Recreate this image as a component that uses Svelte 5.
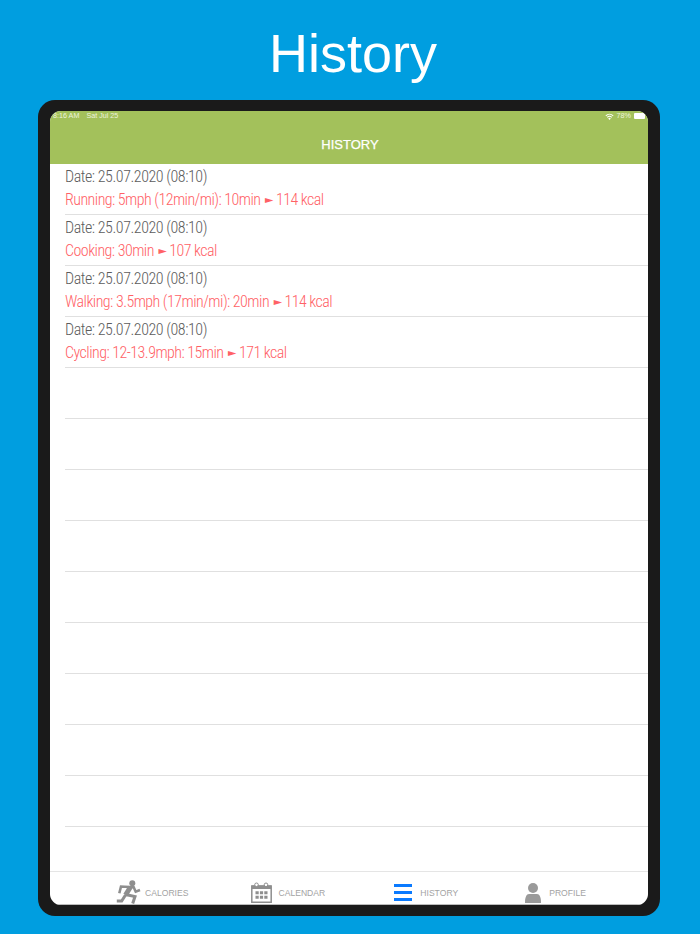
<script lang="ts">
  type Entry = { date: string; activity: string; kcal: string };

  const entries: Entry[] = [
    { date: 'Date: 25.07.2020 (08:10)', activity: 'Running: 5mph (12min/mi): 10min', kcal: '114 kcal' },
    { date: 'Date: 25.07.2020 (08:10)', activity: 'Cooking: 30min', kcal: '107 kcal' },
    { date: 'Date: 25.07.2020 (08:10)', activity: 'Walking: 3.5mph (17min/mi): 20min', kcal: '114 kcal' },
    { date: 'Date: 25.07.2020 (08:10)', activity: 'Cycling: 12-13.9mph: 15min', kcal: '171 kcal' }
  ];
  const emptyRows = Array(9);
</script>

<main class="page">
  <h1>History</h1>

  <div class="device">
    <div class="screen">
      <header class="nav">
        <div class="status">
          <span class="clock">8:16 AM<span class="day">Sat Jul 25</span></span>
          <span class="battery-group">
            <svg class="wifi" viewBox="0 0 12 9" aria-hidden="true">
              <path d="M6 9 4.300 7.100a2.500 2.500 0 0 1 3.400 0z" />
              <path d="M3.400 6.100a3.900 3.900 0 0 1 5.200 0l.9-1a5.300 5.300 0 0 0-7 0z" />
              <path d="M1.500 4a6.600 6.600 0 0 1 9 0l.9-1a8 8 0 0 0-10.800 0z" />
            </svg>
            78%
            <span class="battery"></span>
          </span>
        </div>
        <div class="nav-title">HISTORY</div>
      </header>

      <div class="list">
        {#each entries as entry}
          <div class="row">
            <div class="date">{entry.date}</div>
            <div class="activity">{entry.activity}<span class="arrow">►</span>{entry.kcal}</div>
          </div>
        {/each}
        {#each emptyRows as _}
          <div class="row"></div>
        {/each}
      </div>

      <nav class="tabs">
        <div class="tab tab-calories">
          <svg class="icon" viewBox="0 0 25 25" width="25" height="25" aria-hidden="true">
            <circle cx="16.300" cy="3.300" r="3" fill="#8e8e8e" />
            <path d="M3.300 13.300 5 6.500l12.700.8 2 4.400 4.300-1.700" fill="none" stroke="#8e8e8e" stroke-width="2.600" />
            <path d="M14.500 7 9.500 15" fill="none" stroke="#8e8e8e" stroke-width="5" />
            <path d="M9.500 14.500 19 16.500l-2.300 7M9.500 15l-3.800 6H.8" fill="none" stroke="#8e8e8e" stroke-width="3" />
          </svg>
          <span>CALORIES</span>
        </div>
        <div class="tab tab-calendar">
          <svg class="icon" viewBox="0 0 21 21" width="21" height="21" aria-hidden="true">
            <path d="M.8 4h19.400v16.200H.8z" fill="none" stroke="#8e8e8e" stroke-width="1.500" />
            <path d="M.8 3.500h19.400v3.500H.8z" fill="#8e8e8e" />
            <circle cx="5.500" cy="2.800" r="1.800" fill="#fff" stroke="#8e8e8e" />
            <circle cx="15" cy="2.800" r="1.800" fill="#fff" stroke="#8e8e8e" />
            <path d="M4.500 9.200h3.200v3H4.500zM8.900 9.200h3.200v3H8.900zM13.300 9.200h3.200v3h-3.200zM4.500 13.700h3.200v3H4.500zM8.900 13.700h3.200v3H8.900zM13.300 13.700h3.200v3h-3.200z" fill="#8e8e8e" />
          </svg>
          <span>CALENDAR</span>
        </div>
        <div class="tab tab-history">
          <svg class="icon" viewBox="0 0 18 17" width="18" height="17" aria-hidden="true">
            <path d="M0 0h18v3H0zM0 7h18v3H0zM0 14h18v3H0z" fill="#0a7aff" />
          </svg>
          <span>HISTORY</span>
        </div>
        <div class="tab tab-profile">
          <svg class="icon" viewBox="0 0 16 20" width="16" height="20" aria-hidden="true">
            <circle cx="8" cy="5" r="5" fill="#9a9a9a" />
            <path d="M4 11h8c2.500 0 4 3.500 4 8v1H0v-1c0-4.500 1.500-8 4-8z" fill="#9a9a9a" />
          </svg>
          <span>PROFILE</span>
        </div>
      </nav>
    </div>
  </div>
</main>

<style>
  :global(body) { margin: 0; background: #009ee0; }
  .page { display: flex; flex-direction: column; align-items: center; height: 934px; overflow: hidden; font-family: "Liberation Sans", Arial, sans-serif; }
  h1 { margin: 0; height: 100px; padding-left: 6px; color: #fff; font-size: 54px; font-weight: 400; line-height: 106px; }
  .device { box-sizing: border-box; width: 622px; height: 816px; margin-right: 2px; padding: 11px 12px; border-radius: 17px; background: #1a1a1a; }
  .screen { display: flex; flex-direction: column; height: 100%; overflow: hidden; border-radius: 11px; background: #fff; }
  .nav { flex: none; height: 53px; background: #a3c15b; color: #fff; }
  .status { display: flex; justify-content: space-between; height: 10px; padding: 0 3px; color: #eef4dd; font-size: 7.2px; line-height: 10px; }
  .day { margin-left: 7px; }
  .battery-group { display: inline-flex; align-items: center; gap: 2px; }
  .wifi { width: 9px; height: 7px; margin-right: 1px; fill: #fff; }
  .battery { width: 11px; height: 6px; margin-left: 1px; border-radius: 1px; background: #fff; }
  .nav-title { margin-top: 14px; padding-left: 2px; text-align: center; font-size: 13px; font-weight: 500; line-height: 20px; -webkit-text-stroke: .25px #fff; }
  .list { flex: 1; padding-left: 15px; }
  .row { box-sizing: border-box; height: 51px; border-bottom: 1px solid #e0e0e0; font-family: Roboto, "Liberation Sans", sans-serif; font-stretch: 75%; font-size: 16px; font-weight: 300; letter-spacing: -.45px; line-height: 23px; }
  .date { padding-top: 1px; color: #5c5c5c; }
  .activity { color: #ff6166; letter-spacing: -.53px; }
  .arrow { display: inline-block; margin: 0 .3px 0 1.800px; font-family: "DejaVu Sans", sans-serif; font-size: 14px; line-height: 1; transform: scaleY(.62); }
  .tabs { flex: none; display: flex; box-sizing: border-box; height: 34px; padding-top: 9px; border-top: 1px solid #e5e5e5; border-bottom: 1px solid #bbb; color: #a3a3a3; font-size: 8.600px; }
  .tab { display: flex; align-items: center; gap: 8px; }
  .tab-calories { margin-left: 66px; gap: 4px; }
  .tab-calendar { margin-left: 63px; gap: 6px; }
  .tab-history { margin-left: 69px; }
  .tab-profile { margin-left: 67px; }
</style>
